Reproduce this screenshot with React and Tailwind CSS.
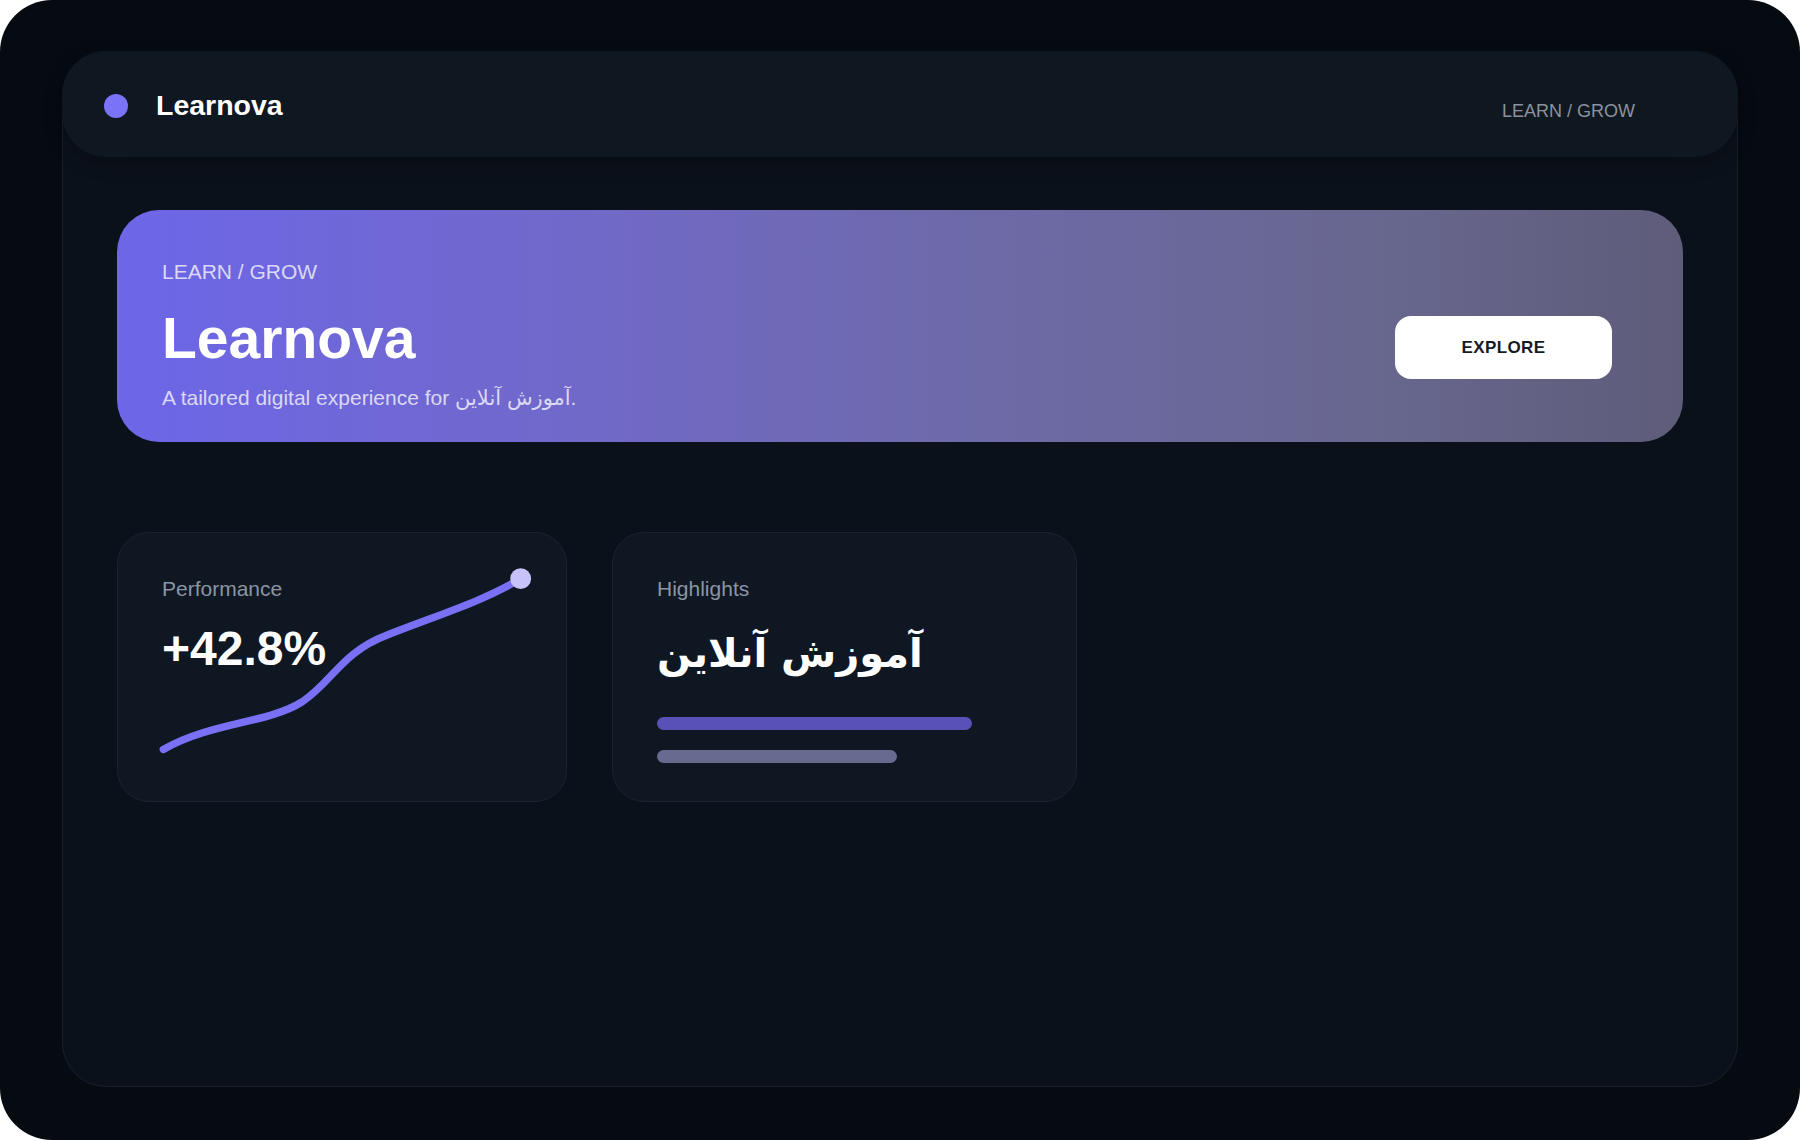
import React from "react";

const FONT = { fontFamily: '"Liberation Sans", "DejaVu Sans", Arial, sans-serif' };

function Chart() {
  return (
    <svg
      className="absolute inset-0 h-full w-full pointer-events-none"
      viewBox="0 0 450 270"
      fill="none"
    >
      <path
        d="M45 218 C 95 190, 150 192, 185 170 C 215 150, 225 120, 270 103 C 320 83, 365 70, 405 46"
        stroke="#7a70f5"
        strokeWidth="7.5"
        strokeLinecap="round"
        strokeLinejoin="round"
      />
      <circle cx="405" cy="46" r="10.5" fill="#c8c2fb" />
    </svg>
  );
}

export default function App() {
  return (
    <div className="bg-white" style={FONT}>
      <div className="h-[1140px] w-[1800px] rounded-[52px] bg-[#060a11] px-[62px] pt-[51px] pb-[53px]">
        <div className="h-full rounded-[44px] border border-[#19202a] bg-[#0b111a]">
          {/* Header */}
          <header className="-mx-px -mt-px flex h-[106px] items-center justify-between rounded-[44px] bg-[#0f1721] pl-[42px] pr-[103px] pt-[3px] shadow-[0_6px_18px_rgba(0,0,0,0.25)]">
            <div className="flex items-center gap-7">
              <span className="h-6 w-6 rounded-full bg-[#7a72f7]" />
              <span className="text-[28.5px] font-bold leading-none text-white">Learnova</span>
            </div>
            <span className="mt-3 text-[18px] text-[#8a929d]">LEARN / GROW</span>
          </header>

          <div className="px-[54px] pt-[53px]">
            {/* Hero */}
            <section className="flex h-[232px] items-start justify-between rounded-[42px] bg-[linear-gradient(90deg,#6d66e8_0%,#7169c8_30%,#6d6aa8_55%,#68678f_80%,#5e5c79_100%)] pl-[45px] pr-[71px] pt-[48px]">
              <div>
                <div className="text-[21px] leading-7 text-white/75">LEARN / GROW</div>
                <h1 className="mt-6 text-[57px] font-bold leading-none text-white">Learnova</h1>
                <p className="mt-[17px] text-[21px] leading-7 text-white/75">
                  A tailored digital experience for آموزش آنلاین.
                </p>
              </div>
              <button className="mt-[58px] flex h-[63px] w-[217px] items-center justify-center rounded-2xl bg-white text-[17px] font-bold tracking-[0.4px] text-[#171a24]">
                EXPLORE
              </button>
            </section>

            {/* Cards */}
            <div className="mt-[90px] flex gap-[45px]">
              <div className="relative h-[270px] w-[450px] rounded-[32px] border border-[#1b2330] bg-[#0f1723] px-[44px] pt-[42px]">
                <div className="text-[21px] leading-7 text-[#8b95a3]">Performance</div>
                <div className="mt-[22px] text-[48px] font-bold leading-none text-white">+42.8%</div>
                <Chart />
              </div>

              <div className="h-[270px] w-[465px] rounded-[32px] border border-[#1b2330] bg-[#0f1723] px-[44px] pt-[42px]">
                <div className="text-[21px] leading-7 text-[#8b95a3]">Highlights</div>
                <div
                  className="mt-[30px] text-left text-[40px] font-bold leading-none text-white"
                  style={{ fontFamily: '"DejaVu Sans", sans-serif' }}
                >
                  <span dir="rtl">آموزش آنلاین</span>
                </div>
                <div className="mt-[44px] h-[13px] w-[315px] rounded-full bg-[#5852b6]" />
                <div className="mt-5 h-[13px] w-[240px] rounded-full bg-[#686a90]" />
              </div>
            </div>
          </div>
        </div>
      </div>
    </div>
  );
}
